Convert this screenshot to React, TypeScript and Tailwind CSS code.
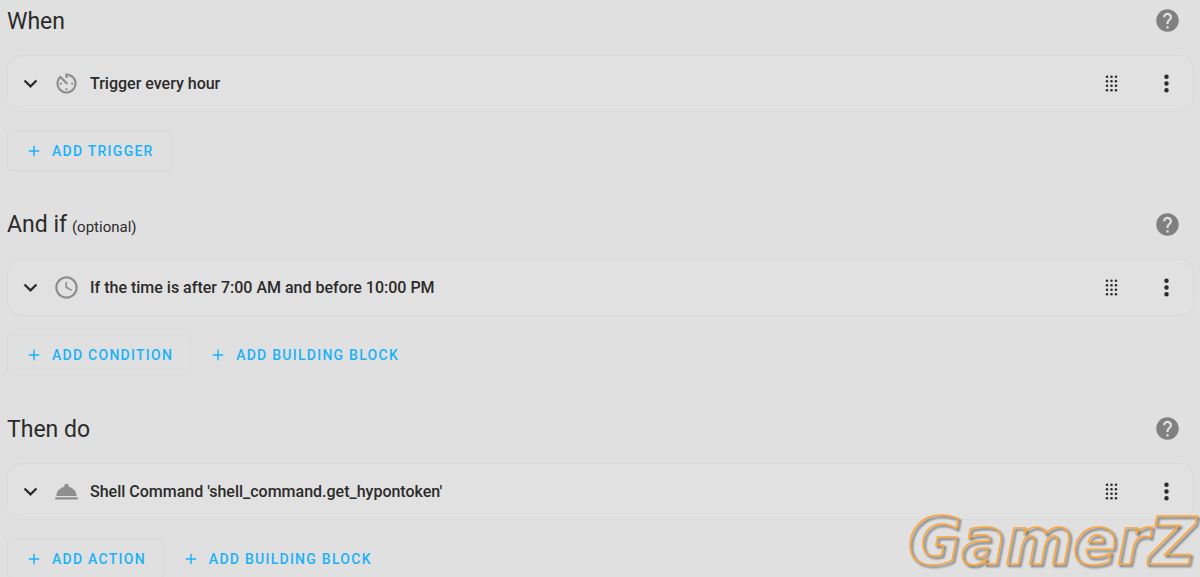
import type { ReactNode } from 'react';

const paths = {
  chevron: 'M7.41,8.58L12,13.17L16.59,8.58L18,10L12,16L6,10L7.41,8.58Z',
  plus: 'M19,13H13V19H11V13H5V11H11V5H13V11H19V13Z',
  timer:
    'M11,17A1,1 0 0,0 12,18A1,1 0 0,0 13,17A1,1 0 0,0 12,16A1,1 0 0,0 11,17M11,3V7H13V5.08C16.39,5.57 19,8.47 19,12A7,7 0 0,1 12,19A7,7 0 0,1 5,12C5,10.32 5.59,8.78 6.58,7.58L12,13L13.41,11.59L6.61,4.79V4.81C4.42,6.45 3,9.05 3,12A9,9 0 0,0 12,21A9,9 0 0,0 21,12A9,9 0 0,0 12,3M18,12A1,1 0 0,0 17,11A1,1 0 0,0 16,12A1,1 0 0,0 17,13A1,1 0 0,0 18,12M6,12A1,1 0 0,0 7,13A1,1 0 0,0 8,12A1,1 0 0,0 7,11A1,1 0 0,0 6,12Z',
  clock:
    'M12 20C16.4 20 20 16.4 20 12S16.4 4 12 4 4 7.6 4 12 7.6 20 12 20M12 2C17.5 2 22 6.5 22 12S17.5 22 12 22C6.5 22 2 17.5 2 12C2 6.5 6.5 2 12 2M17 13.9L16.3 15.2L11 12.3V7H12.5V11.4L17 13.9Z',
  roomService:
    'M12,5A2,2 0 0,1 14,7C14,7.24 13.96,7.47 13.88,7.69C17.95,8.5 21,11.91 21,16H3C3,11.91 6.05,8.5 10.12,7.69C10.04,7.47 10,7.24 10,7A2,2 0 0,1 12,5M22,19H2V17H22V19Z',
  help: 'M15.07,11.25L14.17,12.17C13.45,12.89 13,13.5 13,15H11V14.5C11,13.39 11.45,12.39 12.17,11.67L13.41,10.41C13.78,10.05 14,9.55 14,9C14,7.89 13.1,7 12,7A2,2 0 0,0 10,9H8A4,4 0 0,1 12,5A4,4 0 0,1 16,9C16,9.88 15.64,10.67 15.07,11.25M13,19H11V17H13M12,2A10,10 0 0,0 2,12A10,10 0 0,0 12,22A10,10 0 0,0 22,12C22,6.47 17.5,2 12,2Z',
  dots: 'M12,16A2,2 0 0,1 14,18A2,2 0 0,1 12,20A2,2 0 0,1 10,18A2,2 0 0,1 12,16M12,10A2,2 0 0,1 14,12A2,2 0 0,1 12,14A2,2 0 0,1 10,12A2,2 0 0,1 12,10M12,4A2,2 0 0,1 14,6A2,2 0 0,1 12,8A2,2 0 0,1 10,6A2,2 0 0,1 12,4Z',
};

interface IconProps {
  name: keyof typeof paths;
  className?: string;
}

const Icon = ({ name, className = 'size-[27px]' }: IconProps) => (
  <svg viewBox="0 0 24 24" fill="currentColor" className={`shrink-0 ${className}`} aria-hidden="true">
    <path d={paths[name]} />
  </svg>
);

const DragHandle = () => (
  <svg viewBox="0 0 24 24" fill="currentColor" className="size-[27px]" aria-hidden="true">
    {[6, 10, 14, 18].map((y) =>
      [8, 12, 16].map((x) => <circle key={`${x}-${y}`} cx={x} cy={y} r="1.1" />)
    )}
  </svg>
);

interface AddButtonProps {
  children: ReactNode;
  outlined?: boolean;
}

const AddButton = ({ children, outlined = false }: AddButtonProps) => (
  <button
    type="button"
    className={`flex h-[41px] items-center gap-[9px] rounded text-sm font-medium uppercase tracking-[0.09em] text-[#1ab2fb] ${
      outlined ? 'border border-[#dadada] px-[17px]' : 'px-[10px]'
    }`}
  >
    <Icon name="plus" className="size-[18px]" />
    {children}
  </button>
);

interface Section {
  title: string;
  optional?: boolean;
  icon: keyof typeof paths;
  summary: string;
  add: string;
  buildingBlock?: boolean;
}

const sections: Section[] = [
  { title: 'When', icon: 'timer', summary: 'Trigger every hour', add: 'Add trigger' },
  {
    title: 'And if',
    optional: true,
    icon: 'clock',
    summary: 'If the time is after 7:00 AM and before 10:00 PM',
    add: 'Add condition',
    buildingBlock: true,
  },
  {
    title: 'Then do',
    icon: 'roomService',
    summary: "Shell Command 'shell_command.get_hypontoken'",
    add: 'Add action',
    buildingBlock: true,
  },
];

const AutomationSection = ({ title, optional, icon, summary, add, buildingBlock }: Section) => (
  <section>
    {/* Heading */}
    <div className="flex h-[41px] items-center justify-between pr-[13px]">
      <h2 className="pt-0.5 text-[23px] leading-7">
        {title}
        {optional && <small className="ml-[5px] text-[15px]">(optional)</small>}
      </h2>
      <button type="button" aria-label="Help" className="text-[#808080]">
        <Icon name="help" />
      </button>
    </div>

    {/* Row card */}
    <div className="mt-3.5 flex h-[57px] items-center rounded-[14px] border border-[#dadada] bg-[#e1e1e1] pl-[9px] pr-[13px]">
      <button type="button" aria-label="Expand" className="mr-[9px]">
        <Icon name="chevron" />
      </button>
      <Icon name={icon} className="size-[27px] text-[#8e8e8e]" />
      <h3 className="ml-2.5 flex-1 text-base font-medium">{summary}</h3>
      <button type="button" aria-label="Move" className="mr-7">
        <DragHandle />
      </button>
      <button type="button" aria-label="More options">
        <Icon name="dots" />
      </button>
    </div>

    {/* Add buttons */}
    <div className="mt-[18px] flex gap-2">
      <AddButton outlined>{add}</AddButton>
      {buildingBlock && <AddButton>Add building block</AddButton>}
    </div>
  </section>
);

export default function App() {
  return (
    <div className="relative h-screen overflow-hidden bg-[#e0e0e0] font-[Roboto,sans-serif] text-[#2b2b2b]">
      <main className="flex flex-col gap-[33px] pl-[7px] pr-[6px]">
        {sections.map((section) => (
          <AutomationSection key={section.title} {...section} />
        ))}
      </main>

      {/* Watermark */}
      <span className="pointer-events-none absolute bottom-0 right-1 font-['DejaVu_Sans',sans-serif] text-[65px] font-bold italic leading-[70px] text-transparent drop-shadow-[2px_2px_1px_#555555] [-webkit-text-stroke:0.023em_#ffa535]">
        GamerZ
      </span>
    </div>
  );
}
